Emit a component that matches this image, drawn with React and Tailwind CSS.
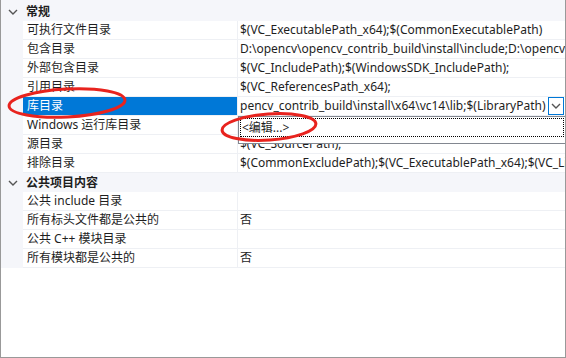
import React from "react";

const FONT = { fontFamily: '"Noto Sans", "Noto Sans CJK SC", sans-serif' };

const general = [
  ["可执行文件目录", "$(VC_ExecutablePath_x64);$(CommonExecutablePath)"],
  ["包含目录", "D:\\opencv\\opencv_contrib_build\\install\\include;D:\\opencv\\opencv_contrib_build\\install\\include\\opencv2"],
  ["外部包含目录", "$(VC_IncludePath);$(WindowsSDK_IncludePath);"],
  ["引用目录", "$(VC_ReferencesPath_x64);"],
  ["库目录", "pencv_contrib_build\\install\\x64\\vc14\\lib;$(LibraryPath)", "selected"],
  ["Windows 运行库目录", ""],
  ["源目录", "$(VC_SourcePath);"],
  ["排除目录", "$(CommonExcludePath);$(VC_ExecutablePath_x64);$(VC_LibraryPath_x64)"],
];

const publicItems = [
  ["公共 include 目录", ""],
  ["所有标头文件都是公共的", "否"],
  ["公共 C++ 模块目录", ""],
  ["所有模块都是公共的", "否"],
];

function Chevron() {
  return (
    <svg width="10" height="6" viewBox="0 0 10 6" className="block">
      <path d="M1 1 L5 5 L9 1" fill="none" stroke="#555" strokeWidth="1.4" />
    </svg>
  );
}

function Group({ title }) {
  return (
    <div className="flex h-[19px] items-center bg-[#f5f6fa]">
      <div className="flex w-[22px] justify-center pl-[2px]">
        <Chevron />
      </div>
      <div className="pl-[3px] text-[12px] font-bold text-[#1e1e1e]">{title}</div>
    </div>
  );
}

function Row({ name, value, state }) {
  const selected = state === "selected";
  return (
    <div className="flex h-[19px] bg-[#f5f6fa]">
      <div className="w-[22px] shrink-0" />
      <div
        className={
          "flex w-[215px] shrink-0 items-center border-b border-r border-[#eef0f4] pl-[4px] text-[12px] " +
          (selected ? "bg-[#0078d7] text-white" : "bg-white text-[#1e1e1e]")
        }
      >
        {name}
      </div>
      <div className="flex min-w-0 flex-1 items-center overflow-hidden whitespace-nowrap border-b border-[#eef0f4] bg-white pl-[2px] text-[12px] text-[#1e1e1e]">
        <span className="flex-1 overflow-hidden">{value}</span>
        {selected && (
          <div className="mr-[1px] flex h-[18px] w-[16px] shrink-0 items-center justify-center border border-[#0078d7] bg-white">
            <Chevron />
          </div>
        )}
      </div>
    </div>
  );
}

export default function App() {
  return (
    <div
      className="relative h-[358px] w-[566px] overflow-hidden border-b border-l border-r border-[#999] bg-white"
      style={FONT}
    >
      <div className="h-[2px] bg-[#f5f6fa]" />
      <Group title="常规" />
      {general.map(([n, v, s]) => (
        <Row key={n} name={n} value={v} state={s} />
      ))}
      <Group title="公共项目内容" />
      {publicItems.map(([n, v]) => (
        <Row key={n} name={n} value={v} />
      ))}

      {/* dropdown popup */}
      <div className="absolute left-[237px] top-[116px] h-[28px] w-[328px] border border-[#828790] bg-white p-[1px]">
        <div className="flex h-[19px] items-center border border-dotted border-black pl-[1px] text-[12px] text-[#1e1e1e]">
          &lt;编辑...&gt;
        </div>
      </div>

      {/* red annotation ellipses */}
      <svg className="pointer-events-none absolute left-0 top-0" width="566" height="358">
        <ellipse cx="66" cy="103" rx="58" ry="14" fill="none" stroke="#e8231e" strokeWidth="3" transform="rotate(-3 66 103)" />
        <ellipse cx="268" cy="127" rx="47" ry="13" fill="none" stroke="#e8231e" strokeWidth="3" transform="rotate(-4 268 127)" />
      </svg>
    </div>
  );
}
